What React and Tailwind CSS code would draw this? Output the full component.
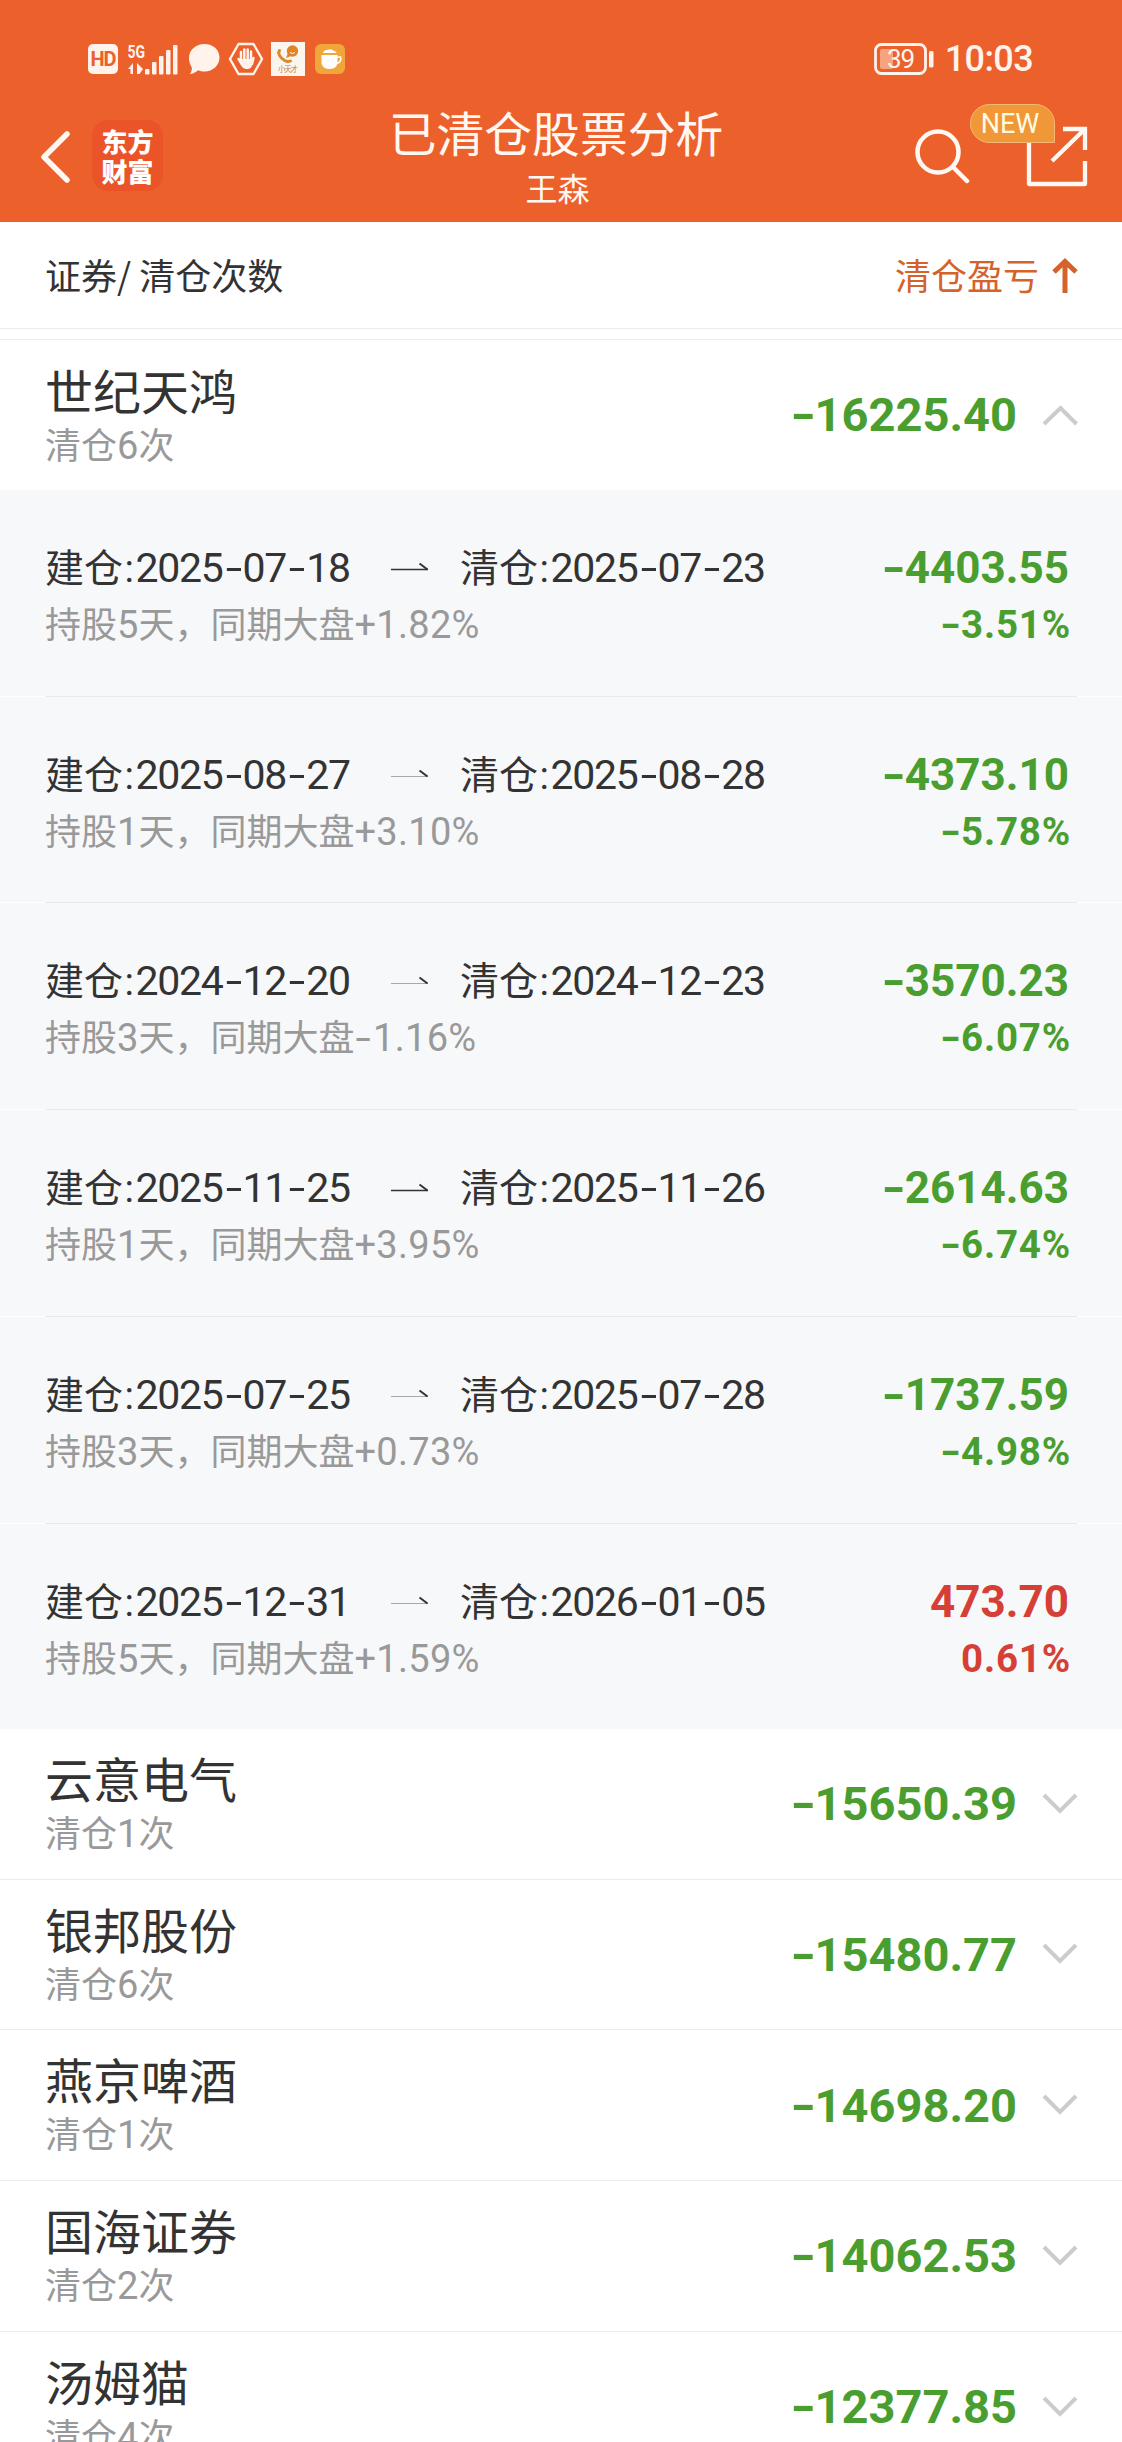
import { useState } from 'react'

const detail = [
  { open: '2025-07-18', close: '2025-07-23', days: 5, index: '+1.82%', profit: '-4403.55', rate: '-3.51%', strong: true },
  { open: '2025-08-27', close: '2025-08-28', days: 1, index: '+3.10%', profit: '-4373.10', rate: '-5.78%' },
  { open: '2024-12-20', close: '2024-12-23', days: 3, index: '-1.16%', profit: '-3570.23', rate: '-6.07%' },
  { open: '2025-11-25', close: '2025-11-26', days: 1, index: '+3.95%', profit: '-2614.63', rate: '-6.74%', strong: true },
  { open: '2025-07-25', close: '2025-07-28', days: 3, index: '+0.73%', profit: '-1737.59', rate: '-4.98%' },
  { open: '2025-12-31', close: '2026-01-05', days: 5, index: '+1.59%', profit: '473.70', rate: '0.61%' },
]

const stocks = [
  { name: '世纪天鸿', count: 6, profit: '-16225.40', detail },
  { name: '云意电气', count: 1, profit: '-15650.39' },
  { name: '银邦股份', count: 6, profit: '-15480.77' },
  { name: '燕京啤酒', count: 1, profit: '-14698.20' },
  { name: '国海证券', count: 2, profit: '-14062.53' },
  { name: '汤姆猫', count: 4, profit: '-12377.85' },
]

const profitColor = (value) => (value.startsWith('-') ? 'text-[#4a9e30]' : 'text-[#d63f35]')

// minus and hyphen are drawn wider than Roboto's own
function Digits({ value, className }) {
  return (
    <span className={`font-[Roboto,sans-serif] ${className}`}>
      {value.split(/(-)/).filter(Boolean).map((part, i) =>
        part === '-' ? (
          <span key={i} className="inline-block w-[0.49em] scale-x-[1.45] text-center">-</span>
        ) : part
      )}
    </span>
  )
}

function StatusBar() {
  return (
    <div className="h-[84px] pt-[34px] pl-[88px] pr-[89px] flex justify-between">
      <div className="h-[50px] flex items-center">
        <span className="w-[30px] h-[30px] rounded-[5px] bg-[#fff3ec] text-[#ec602c] flex items-center justify-center text-[20px] font-bold font-[Roboto,sans-serif] tracking-[-1px]">HD</span>
        <svg width="52" height="34" viewBox="0 0 52 34" className="ml-[9px]" fill="#fff3ec">
          <text x="0.500" y="15.500" fontSize="18" fontWeight="700" textLength="17.500" lengthAdjust="spacingAndGlyphs" className="font-[Roboto]">5G</text>
          <path d="M6 21v11H3.500v-5H1zM10 21l6 6-3.500 5H10z" />
          <rect x="18" y="27" width="4.500" height="5.500" rx="1" />
          <rect x="25" y="20" width="4.500" height="12.500" rx="1" />
          <rect x="32" y="14" width="4.500" height="18.500" rx="1" />
          <rect x="39" y="8" width="4.500" height="24.500" rx="1" />
          <rect x="46" y="3" width="4.500" height="29.500" rx="1" />
        </svg>
        <svg width="32" height="32" viewBox="0 0 32 32" className="ml-[9px]" fill="#fff3ec">
          <path d="M16.500 1C25 1 31.500 6.800 31.500 14.500S25 28.500 16.500 28.500c-2.500 0-4.500-.4-6.500-1.300-2.300 2.200-5 3.500-8.200 3.800 1.700-2.200 2.200-4 2-6.500C2 21.500 1 18.500 1 15 1 6.800 8 1 16.500 1z" />
        </svg>
        <svg width="36" height="34" viewBox="0 0 36 34" className="ml-[8px]" fill="none" stroke="#fff3ec">
          <path d="M10.500 2h15L34 17l-8.500 15h-15L2 17z" strokeWidth="2.400" strokeLinejoin="round" />
          <path d="M13 18V10M16.300 17V7.500M19.700 17V7.500M23 18V9.500M10.500 17l4 6M25.500 16l-1.500 6" strokeWidth="2.500" strokeLinecap="round" />
          <path d="M11.800 17h12.400v5c0 3-2 5-5.500 5-3 0-4.500-1.500-6.900-6z" fill="#fff3ec" stroke="none" />
        </svg>
        <svg width="34" height="34" viewBox="0 0 34 34" className="ml-[7px]">
          <rect width="34" height="34" fill="#fbf5ef" />
          <path d="M8.500 8.500c-1.500 2-.5 5 2.500 8s6.500 3.500 8.500 2.500" fill="none" stroke="#db8a2e" strokeWidth="3" strokeLinecap="round" />
          <circle cx="21.500" cy="9" r="5.700" fill="#e08425" />
          <path d="M17 11l-2 5 5-2z" fill="#e08425" />
          <path d="M19 10.500q2.500 2 5 0" stroke="#fff" fill="none" strokeWidth="1" />
          <text x="7" y="30" fontSize="7.500" textLength="20" fill="#c87d3a" className="font-['Noto_Sans_CJK_SC']">小天才</text>
        </svg>
        <svg width="30" height="30" viewBox="0 0 30 30" className="ml-[10px]">
          <rect width="30" height="30" rx="6" fill="#f0a63a" />
          <path d="M6.500 11h16v7c0 4-2.500 7-8 7s-8-3-8-7z" fill="#fff" />
          <path d="M22 13h3.500q1.500 5-4 6.500" fill="none" stroke="#fff" strokeWidth="1.700" />
          <path d="M8 9q1-3 4-3 4-2 7 1 2 0 2.500 2z" fill="#fff" />
        </svg>
      </div>
      <div className="h-[50px] flex items-center">
        <svg width="60" height="32" viewBox="0 0 60 32">
          <rect x="1.500" y="1.500" width="50" height="29" rx="6" fill="none" stroke="#fff3ec" strokeWidth="2.800" />
          <rect x="6" y="6" width="13" height="20" rx="2" fill="#f6a37f" />
          <rect x="55" y="8" width="4.500" height="16.500" rx="1.500" fill="#fff3ec" />
          <text x="13" y="25" fontSize="26" textLength="28" fill="#fff3ec" className="font-[Roboto]">39</text>
        </svg>
        <span className="ml-[11px] font-[Roboto,sans-serif] text-[36px] font-medium tracking-[-0.6px] text-[#fff3ec]">10:03</span>
      </div>
    </div>
  )
}

function NavBar() {
  return (
    <div className="h-[138px] pl-[40px] pr-[34px] flex justify-between">
      <div className="w-[241px] pt-[36px] flex items-start">
        <svg width="30" height="54" viewBox="0 0 30 54" className="mt-[10px]" fill="none" stroke="#fff8f2" strokeWidth="5.500" strokeLinecap="round" strokeLinejoin="round">
          <path d="M27 4L4 27l23 23" />
        </svg>
        <div className="ml-[22px] w-[71px] h-[71px] rounded-[16px] bg-[#ea5428] text-white text-[26px] leading-[30px] font-black flex flex-col items-center justify-center">
          <span>东方</span>
          <span>财富</span>
        </div>
      </div>
      <div className="pt-[20px] flex flex-col items-center text-[#fff8f2]">
        <h1 className="text-[47.800px] leading-[56px]">已清仓股票分析</h1>
        <p className="mt-[5px] ml-[3px] text-[32px] leading-[44px]">王森</p>
      </div>
      <div className="w-[257px] pt-[36px] flex justify-end items-start">
        <svg width="56" height="56" viewBox="0 0 56 56" className="mt-[9px]" fill="none" stroke="#fff8f2" strokeWidth="4.500" strokeLinecap="round">
          <circle cx="24" cy="23" r="20.500" />
          <path d="M39 38l14 14" />
        </svg>
        <div className="relative ml-[56px]">
          <svg width="62" height="72" viewBox="0 0 62 72" fill="none" stroke="#fff8f2" strokeWidth="4.300" strokeLinejoin="round">
            <path d="M3 14v50h56V41" />
            <path d="M37 9h22v21M59 9L26 41" strokeLinejoin="miter" />
          </svg>
          <span className="absolute left-[-56px] top-[-16px] w-[85px] h-[39px] rounded-[20px] rounded-br-none border border-[#f6b878] bg-[#f09737] text-[#fffbe0] font-[Roboto,sans-serif] text-[27px] leading-[38px] text-center pr-[5px]">NEW</span>
        </div>
      </div>
    </div>
  )
}

function Harpoon({ strong }) {
  return (
    <svg width="38" height="12" viewBox="0 0 38 12" stroke="#333" fill="none">
      <path d="M0 8.500h37" strokeWidth={strong ? 1.400 : 1} opacity={strong ? 1 : 0.4} />
      <path d="M28.500 2.500l8 6" strokeWidth="2" />
    </svg>
  )
}

function DateText({ label, value }) {
  return (
    <>
      {label}
      <span className="inline-block w-[12.500px] text-center font-[Roboto,sans-serif]">:</span>
      <Digits value={value} className="text-[41px] tracking-[-1.3px]" />
    </>
  )
}

function DetailRow({ item, last }) {
  const color = profitColor(item.profit)
  return (
    <div className={last ? 'h-[205px]' : 'h-[206.800px]'}>
      <div className={`pt-[49px] pl-[45px] pr-[53px] flex justify-between ${last ? 'h-[205px]' : 'h-[205.800px]'}`}>
        <div>
          <div className="h-[57px] flex items-center text-[39px] text-[#333]">
            <div className="w-[346px] whitespace-nowrap leading-[57px]">
              <DateText label="建仓" value={item.open} />
            </div>
            <Harpoon strong={item.strong} />
            <div className="ml-[31px] whitespace-nowrap leading-[57px]">
              <DateText label="清仓" value={item.close} />
            </div>
          </div>
          <div className="mt-[-2px] text-[36px] leading-[57px] h-[57px] text-[#999]">
            持股<Digits value={String(item.days)} className="text-[38px]" />天，同期大盘<Digits value={item.index} className="text-[38px] tracking-[0.3px]" />
          </div>
        </div>
        <div className={`pt-px flex flex-col items-end font-bold ${color}`}>
          <Digits value={item.profit} className="text-[44px] leading-[57px]" />
          <Digits value={item.rate} className="mt-[-1px] mr-[-2px] text-[38.500px] leading-[57px] tracking-[0.8px]" />
        </div>
      </div>
      {!last && (
        <div className="h-px bg-white px-[45px]">
          <div className="h-px bg-[#e9eaec]" />
        </div>
      )}
    </div>
  )
}

function StockRow({ stock, open, onToggle }) {
  return (
    <div>
      <div onClick={onToggle} className="h-[149.800px] pl-[45px] pr-[44px] flex justify-between bg-white">
        <div className={open ? 'pt-[21px]' : 'pt-[20px]'}>
          <div className="text-[48px] leading-[56px] text-[#333]">{stock.name}</div>
          <div className="mt-px text-[36px] leading-[50px] text-[#999]">
            清仓<Digits value={String(stock.count)} className="text-[38px]" />次
          </div>
        </div>
        <div className="flex items-center">
          <Digits value={stock.profit} className={`pt-px text-[47px] font-bold ${profitColor(stock.profit)}`} />
          <svg width="36" height="24" viewBox="0 0 36 24" className="ml-[25px]" fill="none" stroke="#ccc" strokeWidth="4">
            <path d={open ? 'M2 21L18.500 5l16 16' : 'M2 3l16 16L34 3'} />
          </svg>
        </div>
      </div>
      {open ? (
        <div className="bg-[#f7f8fa]">
          {stock.detail.map((item, i) => (
            <DetailRow key={item.open} item={item} last={i === stock.detail.length - 1} />
          ))}
        </div>
      ) : (
        <div className="h-px bg-[#ebebeb]" />
      )}
    </div>
  )
}

export default function App() {
  const [opened, setOpened] = useState('世纪天鸿')

  return (
    <div className="w-[1122px] h-[2442px] overflow-hidden bg-white font-['Noto_Sans_CJK_SC',sans-serif]">
      <header className="bg-[#ec602c] h-[222px]">
        <StatusBar />
        <NavBar />
      </header>

      <div className="h-[107px] pl-[45px] pr-[44px] pb-[2px] flex items-center justify-between border-b border-[#ebebeb] text-[36px]">
        <span className="text-[#333]">证券/ 清仓次数</span>
        <span className="flex items-center text-[#d4632b]">
          清仓盈亏
          <svg width="26" height="36" viewBox="0 0 26 36" className="mt-[3px] ml-[13px]" fill="none" stroke="currentColor" strokeWidth="5">
            <path d="M13 35V4M2 14L13 3.500 24 14" />
          </svg>
        </span>
      </div>
      <div className="h-[11px] border-b border-[#ebebeb]" />

      {stocks.map((stock) => (
        <StockRow
          key={stock.name}
          stock={stock}
          open={opened === stock.name && !!stock.detail}
          onToggle={() => setOpened(opened === stock.name ? null : stock.name)}
        />
      ))}
    </div>
  )
}
